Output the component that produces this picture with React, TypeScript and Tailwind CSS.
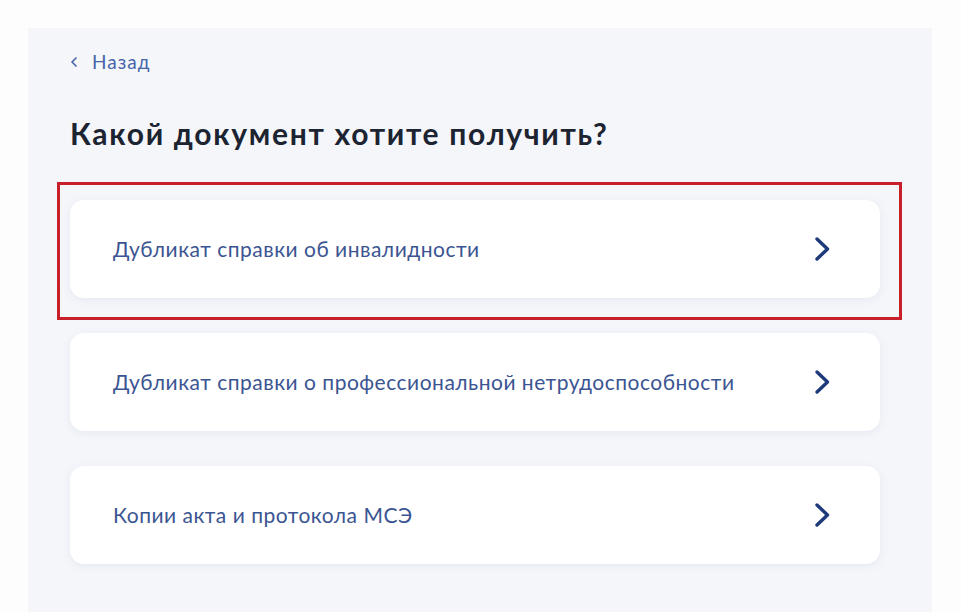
import { ChevronLeft } from 'lucide-react';

const items = [
  'Дубликат справки об инвалидности',
  'Дубликат справки о профессиональной нетрудоспособности',
  'Копии акта и протокола МСЭ',
];

function Chevron() {
  return (
    <svg width="16" height="26" viewBox="0 0 16 26" fill="none" className="text-[#1d3a7a]">
      <path d="M3 3 L13.5 13 L3 23" stroke="currentColor" strokeWidth="3.4" strokeLinecap="round" strokeLinejoin="round" />
    </svg>
  );
}

export default function App() {
  return (
    <div
      className="h-[612px] w-[961px] overflow-hidden bg-[#fdfdfe] pl-[28px] pt-[28px]"
      style={{ fontFamily: 'Lato, "Open Sans", sans-serif' }}
    >
      <div className="h-full w-[904px] bg-[#f4f6fa] pl-[42px] pr-[52px] pt-[22px]">
        <button className="flex items-center gap-[10px] text-[19px] leading-[24px] tracking-[1px] text-[#4664a8]">
          <ChevronLeft className="-ml-[4px] h-[16px] w-[16px]" strokeWidth={2.5} />
          Назад
        </button>

        <h1 className="mt-[42px] text-[30px] font-bold leading-[34px] tracking-[1.7px] text-[#1c2331]">
          Какой документ хотите получить?
        </h1>

        <div className="mt-[50px] flex flex-col gap-[35px]">
          {items.map((label, i) => (
            <div key={label} className="relative">
              <div className="flex h-[98px] items-center justify-between rounded-[14px] bg-white pl-[43px] pr-[50px] shadow-[0_2px_8px_rgba(100,120,160,0.10)]">
                <span className="text-[21px] tracking-[0.5px] text-[#3b5592]">{label}</span>
                <Chevron />
              </div>
              {i === 0 && (
                <div className="pointer-events-none absolute -bottom-[22px] -left-[13px] -right-[22px] -top-[18px] border-[3px] border-[#c8202a]" />
              )}
            </div>
          ))}
        </div>
      </div>
    </div>
  );
}
